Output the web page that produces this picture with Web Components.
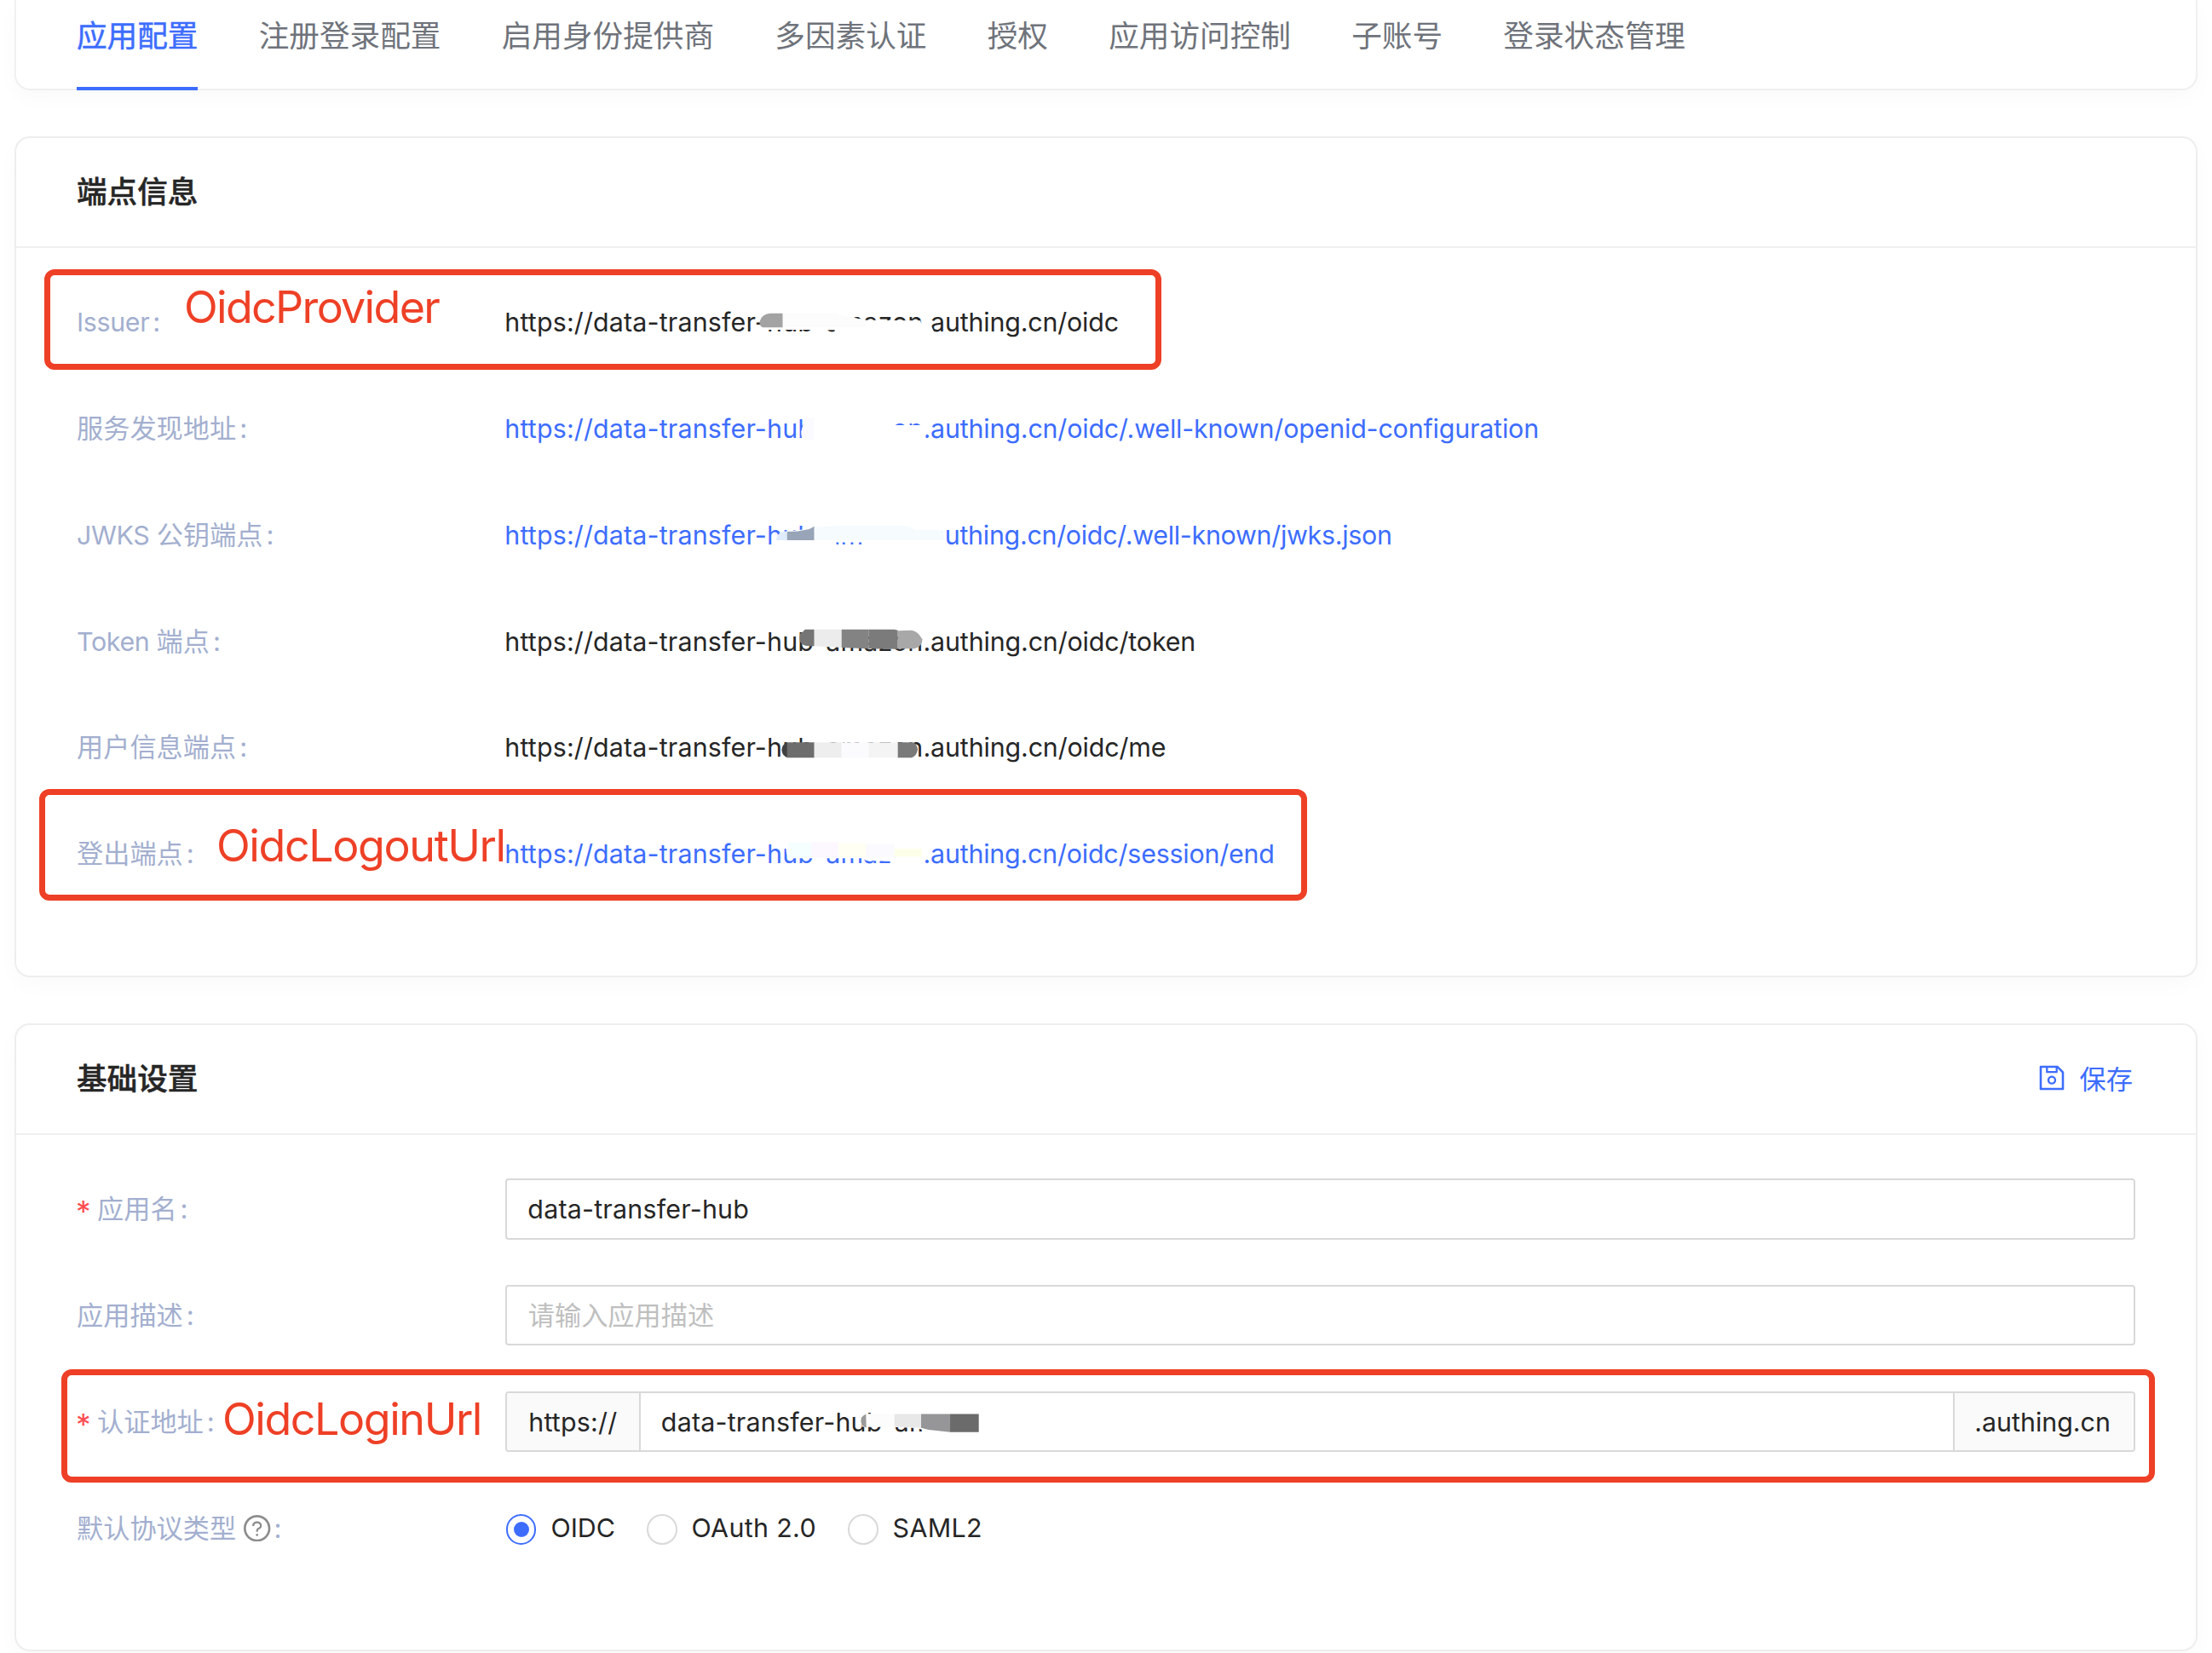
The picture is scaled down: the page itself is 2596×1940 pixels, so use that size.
<!DOCTYPE html>
<html lang="zh-CN">
<head>
<meta charset="utf-8">
<title>应用配置</title>
<style>
html, body { margin: 0; padding: 0; background: #fff; }
body {
  width: 2596px; height: 1940px; overflow: hidden;
  font-family: Inter, "Noto Sans CJK SC", sans-serif;
  font-size: 30.4px; color: #262626;
}
</style>
</head>
<body>
<app-settings></app-settings>
<script>
const define = (name, html, setup) => {
  const tpl = document.createElement('template');
  tpl.innerHTML = html;
  customElements.define(name, class extends HTMLElement {
    connectedCallback() {
      if (this.shadowRoot) return;
      const root = this.attachShadow({ mode: 'open' });
      root.append(tpl.content.cloneNode(true));
      if (setup) setup.call(this, root);
    }
  });
};

define('tab-item', `
<style>
:host { display: block; box-sizing: border-box; height: 106px; line-height: 84.5px; font-size: 35.62px; color: #6f737b; white-space: nowrap; }
:host([active]) { color: #3d6dff; border-bottom: 4px solid #3d6dff; -webkit-text-stroke: .5px #3d6dff; }
</style><slot></slot>`);

define('tab-strip', `
<style>
:host { display: flex; gap: 71.3px; box-sizing: border-box; height: 106px; margin: 0 17px; padding: 0 71px;
  border: 2px solid #f0f0f0; border-top: 0; border-radius: 0 0 18px 18px; background: #fff; box-shadow: 0 9px 26px rgba(20,60,60,.022); }
</style><slot></slot>`);

define('panel-card', `
<style>
:host { display: flex; flex-direction: column; box-sizing: border-box; margin: 54px 17px 0; height: var(--h);
  border: 2px solid #eeeeef; border-radius: 18px; background: #fff; box-shadow: 0 9px 26px rgba(20,60,60,.022); }
header { display: flex; justify-content: space-between; align-items: center; box-sizing: border-box; height: 129px; padding: 0 74px 2px 71px; border-bottom: 2px solid #f0f0f0; }
h2 { margin: 0; font-size: 35.62px; line-height: 50px; font-weight: 500; -webkit-text-stroke: .5px #262626; }
.body { display: flex; flex-direction: column; gap: 53.5px; padding: 51.3px 71.3px 0 71px; }
</style>
<header><h2></h2><slot name="action"></slot></header>
<div class="body"><slot></slot></div>`, function (root) {
  root.querySelector('h2').textContent = this.getAttribute('heading');
});

define('form-row', `
<style>
:host { display: flex; height: 71.3px; line-height: 73px; }
.label { display: flex; flex: 0 0 503.3px; font-size: 31.2px; color: #a3afcf; white-space: pre; }
.star { display: none; width: 24px; color: #ff4d4f; padding-top: 3px; box-sizing: border-box; font-size: 35px; margin-left: -1px; margin-right: 1px; }
:host([required]) .star { display: block; }
.colon { margin-left: 4px; }
.value { flex: 1; position: relative; display: flex; min-width: 0; }
</style>
<div class="label"><span class="star">*</span><slot name="label"></slot><span class="colon">:</span></div>
<div class="value"><slot></slot></div>`);

define('latin-text', `<style>:host { display: inline; font-size: 30.4px; letter-spacing: -.35px; }</style><slot></slot>`);

define('endpoint-url', `
<style>
:host { display: block; white-space: nowrap; margin-left: -1px; }
:host([link]) { color: #3d6dff; }
.host { letter-spacing: .17px; }
.path { letter-spacing: var(--ls, -.12px); }
</style><span class="host">https://data-transfer-hub-amazon</span><span class="path"><slot></slot></span>`);

/* brush strokes lie over the host name; shapes use one third of a pixel as unit */
define('brush-mask', `
<style>:host { position: absolute; left: 0; top: 0; width: 100%; height: 100%; pointer-events: none; }
svg { position: absolute; left: 0; top: 0; overflow: visible; }</style>
<svg width="1" height="1"><g></g></svg>`, function (root) {
  const g = root.querySelector('g');
  g.setAttribute('transform', `translate(${this.getAttribute('dx')} ${this.getAttribute('dy')}) scale(${1 / 3})`);
  g.innerHTML = this.getAttribute('shapes').split('|').map(s => {
    const [c, d] = s.split('@');
    return `<path fill="${c}" d="${d}"/>`;
  }).join('');
});

define('text-field', `
<style>
:host { display: flex; flex: 1; box-sizing: border-box; height: 71.3px; line-height: 68.6px; border: 2px solid #d9d9d9; border-radius: 4px; background: #fff; overflow: hidden; white-space: nowrap; }
.main { flex: 1; padding: 0 24px; letter-spacing: .22px; }
:host([placeholder]) .main { color: #bfbfbf; font-size: 31.2px; letter-spacing: 0; padding-left: 24.5px; }
.addon { display: none; box-sizing: border-box; background: #fafafa; }
.addon.on { display: block; }
.pre { width: 156.5px; padding: 0 0 0 25px; border-right: 2px solid #d9d9d9; letter-spacing: .2px; }
.post { width: 212px; padding: 0 0 0 23.5px; border-left: 2px solid #d9d9d9; }
</style>
<span class="addon pre"></span><span class="main"><slot></slot></span><span class="addon post"></span>`, function (root) {
  for (const k of ['pre', 'post']) if (this.hasAttribute(k)) {
    const e = root.querySelector('.' + k);
    e.textContent = this.getAttribute(k);
    e.classList.add('on');
  }
});

define('radio-option', `
<style>
:host { display: flex; align-items: center; white-space: nowrap; line-height: 71.3px; }
i { display: flex; align-items: center; justify-content: center; box-sizing: border-box; width: 35.6px; height: 35.6px; margin: 3px 17px 0 0; border: 2px solid #d9d9d9; border-radius: 50%; background: #fff; }
:host([checked]) i { border-color: #3d6dff; }
:host([checked]) i::after { content: ""; width: 18px; height: 18px; border-radius: 50%; background: #3d6dff; }
</style><i></i><slot></slot>`);

define('save-button', `
<style>:host { display: flex; align-items: center; gap: 16.5px; color: #3d6dff; font-size: 31.2px; line-height: 50px; padding-top: 2px; }
svg { margin-top: -4px; }</style>
<svg width="32" height="32" viewBox="64 64 896 896" fill="currentColor"><path d="M893.3 293.3L730.7 130.7c-7.500-7.500-16.700-13-26.700-16V112H144c-17.700 0-32 14.300-32 32v736c0 17.700 14.300 32 32 32h736c17.700 0 32-14.300 32-32V338.500c0-17-6.700-33.200-18.700-45.200zM384 184h256v104H384V184zm456 656H184V184h136v136c0 17.700 14.300 32 32 32h320c17.700 0 32-14.300 32-32V205.800l136 136V840zM512 442c-79.500 0-144 64.500-144 144s64.500 144 144 144 144-64.500 144-144-64.500-144-144-144zm0 224c-44.200 0-80-35.800-80-80s35.800-80 80-80 80 35.800 80 80-35.800 80-80 80z"/></svg>
<span><slot></slot></span>`);

define('help-icon', `
<style>:host { display: flex; align-items: center; margin-left: 9px; color: #8c8c8c; height: 71.3px; }</style>
<svg width="31.400" height="31.400" viewBox="64 64 896 896" fill="currentColor"><path d="M512 64C264.600 64 64 264.600 64 512s200.600 448 448 448 448-200.600 448-448S759.400 64 512 64zm0 820c-205.400 0-372-166.600-372-372s166.600-372 372-372 372 166.600 372 372-166.600 372-372 372z"/><path d="M623.600 316.700C593.600 290.400 554 276 512 276s-81.600 14.500-111.600 40.700C369.200 344 352 380.700 352 420v7.600c0 4.400 3.600 8 8 8h48c4.400 0 8-3.600 8-8V420c0-44.100 43.100-80 96-80s96 35.900 96 80c0 31.100-22 59.600-56.100 72.700-21.200 8.100-39.200 22.300-52.100 40.900-13.100 19-19.900 41.800-19.900 64.900V620c0 4.400 3.600 8 8 8h48c4.400 0 8-3.600 8-8v-22.700a48.300 48.300 0 0 1 30.900-44.800c59-22.700 97.100-74.700 97.100-132.500.1-39.300-17.100-76-48.300-103.300zM472 732a40 40 0 1 0 80 0 40 40 0 1 0-80 0z"/></svg>`);

/* red frame with its caption, laid over the page */
define('callout-frame', `
<style>
:host { position: absolute; box-sizing: border-box; border: 7px solid #ee4026; border-radius: 12px; }
span { position: absolute; left: var(--tx); top: var(--ty); font-size: 52px; line-height: 60px; letter-spacing: var(--ls, -1.4px); color: #ee4026; white-space: nowrap; }
</style><span><slot></slot></span>`);

define('app-settings', `
<style>
:host { display: block; position: relative; width: 2596px; height: 1940px; overflow: hidden; }
.radios { display: flex; gap: 37px; margin-left: .500px; }
radio-option + radio-option { letter-spacing: .35px; }
</style>
<tab-strip>
  <tab-item active>应用配置</tab-item><tab-item>注册登录配置</tab-item><tab-item>启用身份提供商</tab-item><tab-item>多因素认证</tab-item><tab-item>授权</tab-item><tab-item>应用访问控制</tab-item><tab-item>子账号</tab-item><tab-item>登录状态管理</tab-item>
</tab-strip>
<panel-card heading="端点信息" style="--h:987px">
  <form-row><latin-text slot="label">Issuer</latin-text><endpoint-url style="--ls:-.18px">.authing.cn/oidc</endpoint-url>
    <brush-mask dx="276.700" dy="7.700" shapes="#fff@M66 85Q68 54 100 52H335L345 60 440 78 632 80 634 90 668 95 682 125H330V113H300V125H250V112H95Z|#a3a3a3@M147 54V104H76Q62 98 66 82Q72 56 105 54Z|#fcfcfc@M147 54H335L345 60 440 78V104H147Z"></brush-mask></form-row>
  <form-row><span slot="label">服务发现地址</span><endpoint-url link style="--ls:-.17px">.authing.cn/oidc/.well-known/openid-configuration</endpoint-url>
    <brush-mask dx="276.700" dy="-117.100" shapes="#fff@M226 415H530V447H640L652 470 648 500H218Q204 480 222 440Z|#fafaff@M226 420H258V498H218L212 470Z"></brush-mask></form-row>
  <form-row><span slot="label"><latin-text>JWKS </latin-text>公钥端点</span><endpoint-url link style="--ls:-.28px">.authing.cn/oidc/.well-known/jwks.json</endpoint-url>
    <brush-mask dx="276.700" dy="-241.900" shapes="#fff@M124 850Q128 822 162 820L240 812 258 803 350 795H570L610 812H700L719 835V872H430V859H335V872H124Z|#dfebfd@M124 852Q124 822 162 820V852Z|#98a4b7@M162 822L200 820 240 813 258 803V852H162Z|#f6fbfe@M258 806L350 800H570Q595 800 610 815H700Q714 818 718 852H258Z"></brush-mask></form-row>
  <form-row><span slot="label"><latin-text>Token </latin-text>端点</span><endpoint-url style="--ls:-.14px">.authing.cn/oidc/token</endpoint-url>
    <brush-mask dx="276.700" dy="8.300" shapes="#757575@M258 40H225Q220 48 208 55Q198 98 240 99H258Z|#ececec@M258 40H354V104L258 99Z|#838383@M354 40H450V108L354 104Z|#7b7b7b@M450 40H540L552 43V109L450 108Z|#a8a8a8@M552 45L600 43Q622 45 638 75Q640 100 610 108H552Z"></brush-mask></form-row>
  <form-row><span slot="label">用户信息端点</span><endpoint-url style="--ls:-.14px">.authing.cn/oidc/me</endpoint-url>
    <brush-mask dx="276.700" dy="-116.500" shapes="#404040@M164 440Q144 446 143 468Q146 490 164 494Z|#6d6d6d@M162 440H258V494H162Z|#eee@M258 440H354V494H258Z|#fbfbfe@M354 440H451V494H354Z|#f4f4f4@M450 440H553V494H450Z|#7a7a7a@M552 440H605Q620 446 622 466Q618 490 600 494H552Z"></brush-mask></form-row>
  <form-row><span slot="label">登出端点</span><endpoint-url link style="--ls:-.2px">.authing.cn/oidc/session/end</endpoint-url>
    <brush-mask dx="276.700" dy="-241.300" shapes="#fff@M165 790H640V872H525V858L440 856 430 848H165Q156 820 158 800Z|#f5ffff@M165 793H247V846H168Z|#fdf7ff@M247 791H342V845H247Z|#fffff4@M342 793H440V845H342Z|#fbfbff@M440 797H540V845H440Z|#feffe8@M540 815H636V842H540Z"></brush-mask></form-row>
</panel-card>
<panel-card heading="基础设置" style="--h:737px">
  <save-button slot="action">保存</save-button>
  <form-row required><span slot="label">应用名</span><text-field>data-transfer-hub</text-field></form-row>
  <form-row><span slot="label">应用描述</span><text-field placeholder>请输入应用描述</text-field></form-row>
  <form-row required><span slot="label">认证地址</span><text-field pre="https://" post=".authing.cn">data-transfer-hub-amazon</text-field>
    <brush-mask dx="416.700" dy="26.400" shapes="#fff@M6 0H480V66H250L200 50 100 45H6Z|#9a9a9a@M20 0Q0 10 2 25Q4 45 22 48Z|#fcfcfd@M21 0H120V45H21Z|#e8e8e8@M120 0H214V49L120 45Z|#969698@M214 0H316V64L240 56 214 49Z|#6b6b6b@M316 0H417V64H316Z"></brush-mask></form-row>
  <form-row><span slot="label">默认协议类型</span><help-icon slot="label"></help-icon>
    <div class="radios"><radio-option checked>OIDC</radio-option><radio-option>OAuth 2.0</radio-option><radio-option>SAML2</radio-option></div></form-row>
</panel-card>
<callout-frame style="left:52px;top:316px;width:1311px;height:118px;--tx:157px;--ty:7.600px;--ls:-1.700px">OidcProvider</callout-frame>
<callout-frame style="left:46px;top:926px;width:1488px;height:130.500px;--tx:201px;--ty:30px">OidcLogoutUrl</callout-frame>
<callout-frame style="left:72px;top:1607px;width:2457px;height:133px;--tx:182px;--ty:22px;--ls:-1.450px">OidcLoginUrl</callout-frame>
`);
</script>
</body>
</html>
